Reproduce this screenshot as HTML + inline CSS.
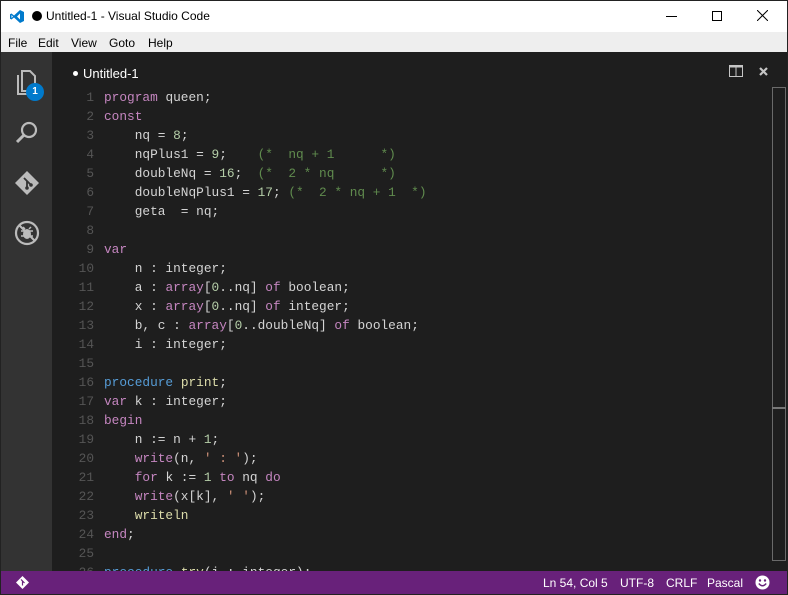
<!DOCTYPE html>
<html><head><meta charset="utf-8"><style>
*{margin:0;padding:0;box-sizing:border-box}
body{width:788px;height:595px;overflow:hidden;background:#1e1e1e;font-family:"Liberation Sans",sans-serif;position:relative}
.win{position:absolute;left:0;top:0;width:788px;height:595px;border:1px solid #222}
.title{position:absolute;left:0;top:0;width:788px;height:32px;background:#fff;font-size:12px;color:#000}
.menu{position:absolute;left:0;top:32px;width:788px;height:20px;background:#eee;font-size:12px;color:#000}
.menu span{position:absolute;top:4px}
.act{position:absolute;left:0;top:52px;width:52px;height:519px;background:#333}
.ed{position:absolute;left:52px;top:52px;width:734px;height:519px;background:#1e1e1e;overflow:hidden}
.code{position:absolute;left:0;top:36px;font-family:"Liberation Mono",monospace;font-size:12.8px;line-height:19px;color:#d4d4d4;white-space:pre}
.ln{display:inline-block;width:42px;text-align:right;color:#555;margin-right:10px}
.k{color:#c586c0}.b{color:#569cd6}.n{color:#b5cea8}.c{color:#608b4e}.f{color:#dcdcaa}.s{color:#ce9178}
.status{position:absolute;left:0;top:571px;width:788px;height:23px;background:#68217a;color:#fff;font-size:12px}
.status span{position:absolute;top:5px}
</style></head><body>
<div class="title">
<svg style="position:absolute;left:10px;top:10px" width="14" height="13" viewBox="0 0 14 13"><path d="M10 0L14 2V11L10 13L4 7.5L1.5 9.5L0 8.8V4.2L1.5 3.5L4 5.5ZM10 3.5L7 6.5L10 9.5Z M1.5 5V8L3 6.5Z" fill="#007acc" fill-rule="evenodd"/></svg>
<div style="position:absolute;left:32px;top:11px;width:10px;height:10px;border-radius:50%;background:#000"></div>
<span style="position:absolute;left:46px;top:9px">Untitled-1 - Visual Studio Code</span>
<div style="position:absolute;left:666px;top:16px;width:11px;height:1px;background:#000"></div>
<div style="position:absolute;left:712px;top:11px;width:10px;height:10px;border:1px solid #000"></div>
<svg style="position:absolute;left:757px;top:10px" width="11" height="11"><path d="M0 0L11 11M11 0L0 11" stroke="#000"/></svg>
</div>
<div class="menu"><span style="left:8px">File</span><span style="left:38px">Edit</span><span style="left:71px">View</span><span style="left:109px">Goto</span><span style="left:148px">Help</span></div>
<div class="act">
<svg style="position:absolute;left:16px;top:17px" width="24" height="26"><path d="M6 2H14L19 7V22H6Z" fill="none" stroke="#bbb" stroke-width="2"/><path d="M2 6V25H15" fill="none" stroke="#bbb" stroke-width="2"/></svg>
<div style="position:absolute;left:26px;top:31px;width:18px;height:18px;border-radius:50%;background:#007acc;color:#fff;font-size:10px;font-weight:bold;text-align:center;line-height:18px">1</div>
<svg style="position:absolute;left:14px;top:68px" width="26" height="26"><circle cx="15" cy="10" r="7" fill="none" stroke="#bbb" stroke-width="2.2"/><path d="M10 15L3 22" stroke="#bbb" stroke-width="3"/></svg>
<svg style="position:absolute;left:14px;top:118px" width="26" height="26"><path d="M13 1L25 13L13 25L1 13Z" fill="#bbb"/><path d="M10 8L13 11V18M13 11L17 15" stroke="#333" stroke-width="1.8" fill="none"/><circle cx="13" cy="18" r="1.8" fill="#333"/><circle cx="17" cy="15" r="1.8" fill="#333"/></svg>
<svg style="position:absolute;left:14px;top:168px" width="26" height="26"><circle cx="13" cy="13" r="11" fill="none" stroke="#bbb" stroke-width="2.2"/><path d="M5 5L21 21" stroke="#bbb" stroke-width="2"/><ellipse cx="13" cy="14" rx="4" ry="5" fill="#bbb"/><path d="M7 11H19M7 16H19M9 7L11 9M17 7L15 9" stroke="#bbb" stroke-width="1.5"/></svg>
</div>
<div class="ed">
<div style="position:absolute;left:21px;top:19px;width:5px;height:5px;border-radius:50%;background:#fff"></div>
<span style="position:absolute;left:31px;top:14px;color:#fff;font-size:13px">Untitled-1</span>
<svg style="position:absolute;left:677px;top:13px" width="14" height="12"><rect x="0.5" y="0.5" width="13" height="11" fill="none" stroke="#c5c5c5"/><rect x="0.5" y="0.5" width="13" height="2" fill="#c5c5c5"/><path d="M7 1V12" stroke="#c5c5c5"/></svg>
<svg style="position:absolute;left:707px;top:15px" width="9" height="9"><path d="M1 1L8 8M8 1L1 8" stroke="#c5c5c5" stroke-width="2.2"/></svg>
<div class="code"><span class="ln">1</span><span class="k">program</span> queen;
<span class="ln">2</span><span class="k">const</span>
<span class="ln">3</span>    nq = <span class="n">8</span>;
<span class="ln">4</span>    nqPlus1 = <span class="n">9</span>;    <span class="c">(*  nq + 1      *)</span>
<span class="ln">5</span>    doubleNq = <span class="n">16</span>;  <span class="c">(*  2 * nq      *)</span>
<span class="ln">6</span>    doubleNqPlus1 = <span class="n">17</span>; <span class="c">(*  2 * nq + 1  *)</span>
<span class="ln">7</span>    geta  = nq;
<span class="ln">8</span>
<span class="ln">9</span><span class="k">var</span>
<span class="ln">10</span>    n : integer;
<span class="ln">11</span>    a : <span class="k">array</span>[<span class="n">0</span>..nq] <span class="k">of</span> boolean;
<span class="ln">12</span>    x : <span class="k">array</span>[<span class="n">0</span>..nq] <span class="k">of</span> integer;
<span class="ln">13</span>    b, c : <span class="k">array</span>[<span class="n">0</span>..doubleNq] <span class="k">of</span> boolean;
<span class="ln">14</span>    i : integer;
<span class="ln">15</span>
<span class="ln">16</span><span class="b">procedure</span> <span class="f">print</span>;
<span class="ln">17</span><span class="k">var</span> k : integer;
<span class="ln">18</span><span class="k">begin</span>
<span class="ln">19</span>    n := n + <span class="n">1</span>;
<span class="ln">20</span>    <span class="k">write</span>(n, <span class="s">' : '</span>);
<span class="ln">21</span>    <span class="k">for</span> k := <span class="n">1</span> <span class="k">to</span> nq <span class="k">do</span>
<span class="ln">22</span>    <span class="k">write</span>(x[k], <span class="s">' '</span>);
<span class="ln">23</span>    <span class="f">writeln</span>
<span class="ln">24</span><span class="k">end</span>;
<span class="ln">25</span>
<span class="ln">26</span><span class="b">procedure</span> <span class="f">try</span>(i : integer);</div>
<div style="position:absolute;left:720px;top:35px;width:14px;height:474px;border:1px solid #6a6a6a"></div>
<div style="position:absolute;left:720px;top:355px;width:14px;height:2px;background:#777"></div>
</div>
<div class="status">
<svg style="position:absolute;left:16px;top:5px" width="13" height="13"><path d="M6.5 0L13 6.5L6.5 13L0 6.5Z" fill="#fff"/><path d="M5 3.5L6.5 5V9.5M6.5 5L8.5 7" stroke="#68217a" stroke-width="1.2" fill="none"/></svg>
<span style="left:543px">Ln 54, Col 5</span><span style="left:620px">UTF-8</span><span style="left:666px">CRLF</span><span style="left:707px">Pascal</span>
<svg style="position:absolute;left:755px;top:4px" width="15" height="15"><circle cx="7.5" cy="7.5" r="7" fill="#fff"/><circle cx="5" cy="5.5" r="1.2" fill="#68217a"/><circle cx="10" cy="5.5" r="1.2" fill="#68217a"/><path d="M3.8 8.5Q7.5 13 11.2 8.5" stroke="#68217a" stroke-width="1.4" fill="none"/></svg>
</div>
<div class="win"></div>
</body></html>
